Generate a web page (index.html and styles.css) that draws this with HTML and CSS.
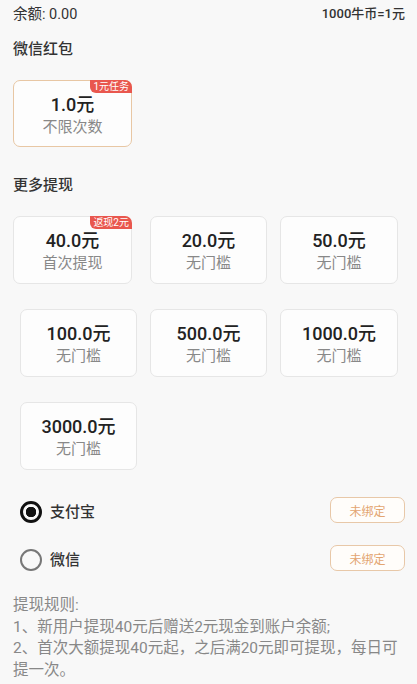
FILE: index.html
```html
<!DOCTYPE html>
<html lang="zh-CN">
<head>
    <meta charset="UTF-8">
    <meta name="viewport" content="width=device-width, initial-scale=1.0">
    <title>提现</title>
    <link rel="stylesheet" href="styles.css">
</head>
<body>
    <div class="page">
        <!-- 顶部余额 -->
        <div class="top-bar">
            <span class="balance">余额: 0.00</span>
            <span class="rate">1000牛币=1元</span>
        </div>

        <!-- 微信红包 -->
        <h2 class="section-title">微信红包</h2>
        <div class="card card-gold">
            <span class="badge">1元任务</span>
            <div class="amount">1.0元</div>
            <div class="desc">不限次数</div>
        </div>

        <!-- 更多提现 -->
        <h2 class="section-title more">更多提现</h2>
        <div class="grid">
            <div class="card first">
                <span class="badge">返现2元</span>
                <div class="amount">40.0元</div>
                <div class="desc">首次提现</div>
            </div>
            <div class="card">
                <div class="amount">20.0元</div>
                <div class="desc">无门槛</div>
            </div>
            <div class="card">
                <div class="amount">50.0元</div>
                <div class="desc">无门槛</div>
            </div>
            <div class="card shifted">
                <div class="amount">100.0元</div>
                <div class="desc">无门槛</div>
            </div>
            <div class="card">
                <div class="amount">500.0元</div>
                <div class="desc">无门槛</div>
            </div>
            <div class="card">
                <div class="amount">1000.0元</div>
                <div class="desc">无门槛</div>
            </div>
            <div class="card shifted">
                <div class="amount">3000.0元</div>
                <div class="desc">无门槛</div>
            </div>
        </div>

        <!-- 提现方式 -->
        <div class="pay-list">
            <div class="pay-row">
                <span class="radio checked"></span>
                <span class="pay-name">支付宝</span>
                <button class="bind-btn">未绑定</button>
            </div>
            <div class="pay-row">
                <span class="radio"></span>
                <span class="pay-name">微信</span>
                <button class="bind-btn">未绑定</button>
            </div>
        </div>

        <!-- 提现规则 -->
        <div class="rules">
            <p>提现规则:</p>
            <p>1、新用户提现40元后赠送2元现金到账户余额;</p>
            <p>2、首次大额提现40元起，之后满20元即可提现，每日可提一次。</p>
        </div>
    </div>
</body>
</html>
```

FILE: styles.css
```css
body {
    margin: 0;
    background-color: #f8f8f8;
    color: #333;
    font-family: Roboto, "Noto Sans CJK SC", sans-serif;
}
.page {
    padding: 0 12px 0 13px;
}
.top-bar {
    display: flex;
    justify-content: space-between;
    align-items: center;
    height: 25px;
}
.balance {
    font-size: 14.5px;
}
.rate {
    font-size: 13px;
    font-weight: 500;
}
.section-title {
    margin: 13px 0 0;
    font-size: 15px;
    font-weight: 500;
    line-height: 22px;
}
.section-title.more {
    margin-top: 27px;
}
.card {
    position: relative;
    box-sizing: border-box;
    height: 68px;
    padding-top: 13px;
    text-align: center;
    background-color: #fdfdfd;
    border: 1px solid #e6e6e6;
    border-radius: 7px;
}
.card-gold {
    width: 119px;
    height: 67px;
    margin-top: 20px;
    border: 1.5px solid #e8c7a4;
}
.amount {
    font-size: 18px;
    font-weight: 500;
    line-height: 22px;
    color: #222;
}
.desc {
    font-size: 15px;
    line-height: 22px;
    color: #888;
}
.badge {
    position: absolute;
    top: -1px;
    right: -1px;
    padding: 0 3px;
    font-size: 10px;
    line-height: 13px;
    color: #fff;
    background-color: #e9574e;
    border-radius: 0 7px 0 6px;
}
.grid {
    display: grid;
    grid-template-columns: 124px 117px 118px;
    column-gap: 13px;
    row-gap: 25px;
    margin-top: 20px;
}
.card.first {
    margin-right: 5px;
}
.card.shifted {
    margin-left: 7px;
}
.pay-list {
    margin-top: 16px;
}
.pay-row {
    display: flex;
    align-items: center;
    height: 48px;
}
.radio {
    box-sizing: border-box;
    width: 22px;
    height: 22px;
    margin: 3px 8px 0 7px;
    border: 2px solid #777;
    border-radius: 50%;
}
.radio.checked {
    border: 3px solid #111;
    background: radial-gradient(circle, #111 0, #111 5px, transparent 5.5px);
}
.pay-name {
    flex: 1;
    font-size: 15px;
    font-weight: 500;
}
.bind-btn {
    width: 75px;
    height: 26px;
    padding: 0;
    font-family: inherit;
    font-size: 12px;
    color: #e3a571;
    background-color: #fffdfa;
    border: 1px solid #e8c8a8;
    border-radius: 7px;
}
.rules {
    margin-top: 13px;
    font-size: 15.5px;
    line-height: 21.5px;
    color: #888;
}
.rules p {
    margin: 0;
}
```
